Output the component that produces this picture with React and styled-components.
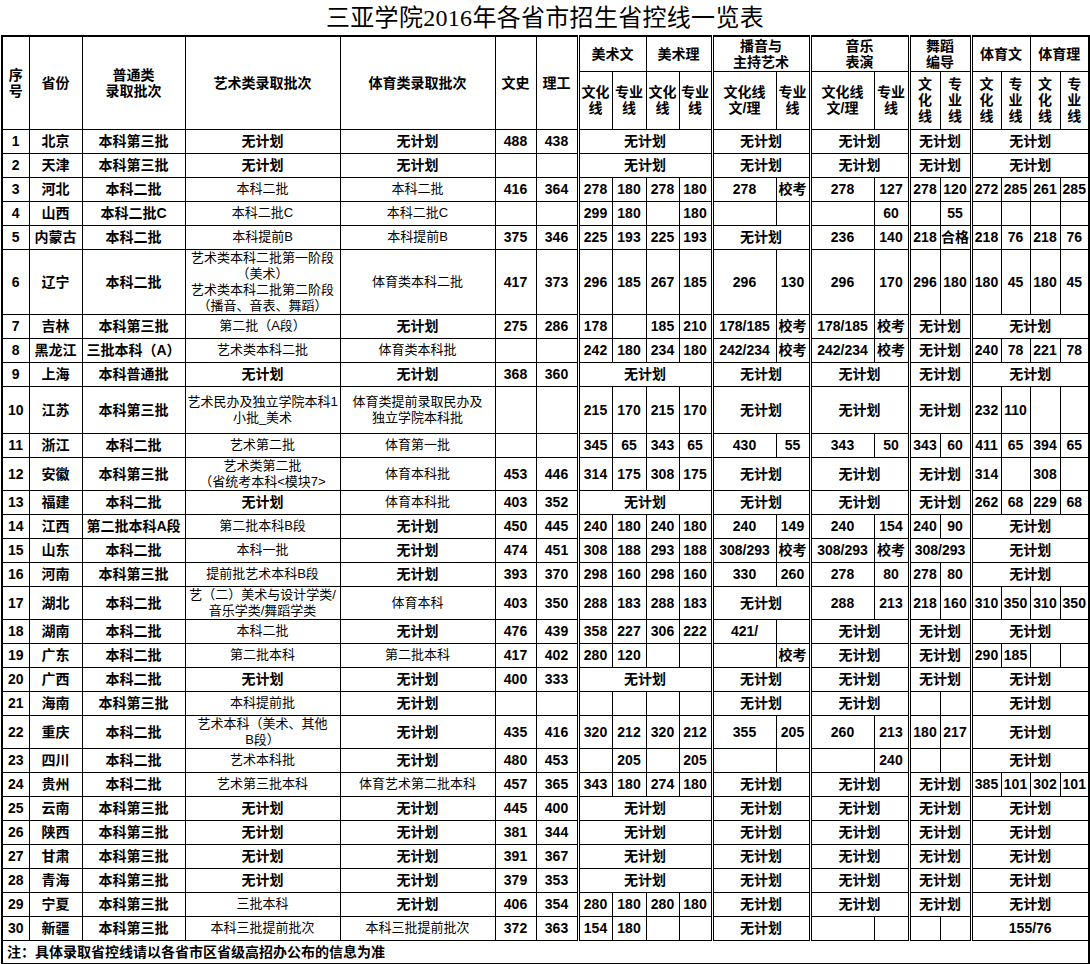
import React from 'react'
import styled, { createGlobalStyle } from 'styled-components'

const GlobalStyle = createGlobalStyle`
  body {
    margin: 0;
    background: #fff;
    color: #000;
  }
`

const N = '无计划'
const ALL = [[N, 4], [N, 2], [N, 2], [N, 2], [N, 4]]
const widths = [27, 53, 103, 155, 155, 41, 42, 34, 34, 33, 33, 64, 34, 64, 35, 31, 31, 30, 29, 30, 29]
const dblStarts = [7, 11, 13, 15, 17]

const rows = [
  { p: '北京', b: '本科第三批', art: N, pe: N, w: '488', l: '438', g: ALL },
  { p: '天津', b: '本科第三批', art: N, pe: N, w: '', l: '', g: ALL },
  { p: '河北', b: '本科二批', art: '本科二批', pe: '本科二批', w: '416', l: '364',
    g: ['278', '180', '278', '180', '278', '校考', '278', '127', '278', '120', '272', '285', '261', '285'] },
  { p: '山西', b: '本科二批C', art: '本科二批C', pe: '本科二批C', w: '', l: '',
    g: ['299', '180', '', '180', '', '', '', '60', '', '55', '', '', '', ''] },
  { p: '内蒙古', b: '本科二批', art: '本科提前B', pe: '本科提前B', w: '375', l: '346',
    g: ['225', '193', '225', '193', [N, 2], '236', '140', '218', '合格', '218', '76', '218', '76'] },
  { p: '辽宁', b: '本科二批', h: 64,
    art: '艺术类本科二批第一阶段\n（美术）\n艺术类本科二批第二阶段\n（播音、音表、舞蹈）',
    pe: '体育类本科二批', w: '417', l: '373',
    g: ['296', '185', '267', '185', '296', '130', '296', '170', '296', '180', '180', '45', '180', '45'] },
  { p: '吉林', b: '本科第三批', art: '第二批（A段）', pe: N, w: '275', l: '286',
    g: ['178', '', '185', '210', '178/185', '校考', '178/185', '校考', [N, 2], [N, 4]] },
  { p: '黑龙江', b: '三批本科（A）', art: '艺术类本科二批', pe: '体育类本科批', w: '', l: '',
    g: ['242', '180', '234', '180', '242/234', '校考', '242/234', '校考', [N, 2], '240', '78', '221', '78'] },
  { p: '上海', b: '本科普通批', art: N, pe: N, w: '368', l: '360', g: ALL },
  { p: '江苏', b: '本科第三批', h: 47, art: '艺术民办及独立学院本科1\n小批_美术',
    pe: '体育类提前录取民办及\n独立学院本科批', w: '', l: '',
    g: ['215', '170', '215', '170', [N, 2], [N, 2], [N, 2], '232', '110', '', ''] },
  { p: '浙江', b: '本科二批', art: '艺术第二批', pe: '体育第一批', w: '', l: '',
    g: ['345', '65', '343', '65', '430', '55', '343', '50', '343', '60', '411', '65', '394', '65'] },
  { p: '安徽', b: '本科第三批', h: 32, art: '艺术类第二批\n（省统考本科<模块7>', pe: '体育本科批', w: '453', l: '446',
    g: ['314', '175', '308', '175', [N, 2], [N, 2], [N, 2], '314', '', '308', ''] },
  { p: '福建', b: '本科二批', art: N, pe: '体育本科批', w: '403', l: '352',
    g: [[N, 4], [N, 2], [N, 2], [N, 2], '262', '68', '229', '68'] },
  { p: '江西', b: '第二批本科A段', art: '第二批本科B段', pe: N, w: '450', l: '445',
    g: ['240', '180', '240', '180', '240', '149', '240', '154', '240', '90', [N, 4]] },
  { p: '山东', b: '本科二批', art: '本科一批', pe: N, w: '474', l: '451',
    g: ['308', '188', '293', '188', '308/293', '校考', '308/293', '校考', ['308/293', 2], [N, 4]] },
  { p: '河南', b: '本科第三批', art: '提前批艺术本科B段', pe: N, w: '393', l: '370',
    g: ['298', '160', '298', '160', '330', '260', '278', '80', '278', '80', [N, 4]] },
  { p: '湖北', b: '本科二批', h: 32, art: '艺（二）美术与设计学类/\n音乐学类/舞蹈学类', pe: '体育本科', w: '403', l: '350',
    g: ['288', '183', '288', '183', [N, 2], '288', '213', '218', '160', '310', '350', '310', '350'] },
  { p: '湖南', b: '本科二批', art: '本科二批', pe: N, w: '476', l: '439',
    g: ['358', '227', '306', '222', '421/', '', [N, 2], [N, 2], [N, 4]] },
  { p: '广东', b: '本科二批', art: '第二批本科', pe: '第二批本科', w: '417', l: '402',
    g: ['280', '120', '', '', '', '校考', [N, 2], [N, 2], '290', '185', '', ''] },
  { p: '广西', b: '本科二批', art: N, pe: N, w: '400', l: '333', g: ALL },
  { p: '海南', b: '本科第三批', art: '本科提前批', pe: N, w: '', l: '',
    g: ['', '', '', '', [N, 2], [N, 2], '', '', [N, 4]] },
  { p: '重庆', b: '本科二批', h: 32, art: '艺术本科（美术、其他\nB段）', pe: N, w: '435', l: '416',
    g: ['320', '212', '320', '212', '355', '205', '260', '213', '180', '217', [N, 4]] },
  { p: '四川', b: '本科二批', art: '艺术本科批', pe: N, w: '480', l: '453',
    g: ['', '205', '', '205', '', '', '', '240', '', '', [N, 4]] },
  { p: '贵州', b: '本科二批', art: '艺术第三批本科', pe: '体育艺术第二批本科', w: '457', l: '365',
    g: ['343', '180', '274', '180', [N, 2], [N, 2], [N, 2], '385', '101', '302', '101'] },
  { p: '云南', b: '本科第三批', art: N, pe: N, w: '445', l: '400', g: ALL },
  { p: '陕西', b: '本科第三批', art: N, pe: N, w: '381', l: '344', g: ALL },
  { p: '甘肃', b: '本科第三批', art: N, pe: N, w: '391', l: '367', g: ALL },
  { p: '青海', b: '本科第三批', art: N, pe: N, w: '379', l: '353', g: ALL },
  { p: '宁夏', b: '本科第三批', art: '三批本科', pe: N, w: '406', l: '354',
    g: ['280', '180', '280', '180', [N, 2], [N, 2], [N, 2], [N, 4]] },
  { p: '新疆', b: '本科第三批', art: '本科三批提前批次', pe: '本科三批提前批次', w: '372', l: '363',
    g: ['154', '180', '', '', [N, 2], '', '', '', '', ['155/76', 4]] },
]

const groups = [
  ['美术文', 7], ['美术理', 9], ['播音与\n主持艺术', 11], ['音乐\n表演', 13],
  ['舞蹈\n编导', 15], ['体育文', 17], ['体育理', 19],
]

const subHeads = [
  '文化\n线', '专业\n线', '文化\n线', '专业\n线', '文化线\n文/理', '专业\n线',
  '文化线\n文/理', '专业\n线', '文\n化\n线', '专\n业\n线', '文\n化\n线', '专\n业\n线',
  '文\n化\n线', '专\n业\n线',
]

const Page = styled.div`
  width: 1088px;
  padding-left: 1px;
  font-family: "Liberation Sans", "Noto Sans CJK SC", sans-serif;
`

const Title = styled.h1`
  margin: 0;
  height: 35px;
  line-height: 37px;
  text-align: center;
  font-family: "Liberation Serif", "Noto Sans CJK SC", serif;
  font-size: 24px;
  font-weight: 400;
  letter-spacing: 0.3px;
`

const Sheet = styled.table`
  width: 1087px;
  table-layout: fixed;
  border-collapse: collapse;
  border: 2px solid #000;
`

const Row = styled.tr`
  height: ${(p) => p.$h}px;
`

const HeadCell = styled.th`
  padding: 0;
  border: 1px solid #000;
  border-left: ${(p) => (p.$dbl ? '3px double #000' : '1px solid #000')};
  font-size: 14px;
  font-weight: 700;
  line-height: 16px;
  text-align: center;
  vertical-align: middle;
  white-space: nowrap;
`

const Cell = styled.td`
  padding: 0;
  border: 1px solid #000;
  border-left: ${(p) => (p.$dbl ? '3px double #000' : '1px solid #000')};
  font-size: ${(p) => (p.$bold ? '14px' : '13px')};
  font-weight: ${(p) => (p.$bold ? 700 : 400)};
  line-height: 16px;
  text-align: center;
  vertical-align: middle;
  white-space: nowrap;
  overflow: hidden;
`

const NoteCell = styled.td`
  padding: 0 0 0 4px;
  border: 1px solid #000;
  font-size: 14px;
  font-weight: 700;
  line-height: 16px;
  text-align: left;
  vertical-align: middle;
`

const Lines = ({ t }) =>
  t.split('\n').map((s, i) => (
    <React.Fragment key={i}>
      {i > 0 && <br />}
      {s}
    </React.Fragment>
  ))

function DataRow({ r, idx }) {
  let col = 7
  return (
    <Row $h={r.h || 24}>
      <Cell $bold>{idx + 1}</Cell>
      <Cell $bold>{r.p}</Cell>
      <Cell $bold>{r.b}</Cell>
      <Cell $bold={r.art === N}><Lines t={r.art} /></Cell>
      <Cell $bold={r.pe === N}><Lines t={r.pe} /></Cell>
      <Cell $bold>{r.w}</Cell>
      <Cell $bold>{r.l}</Cell>
      {r.g.map((c, k) => {
        const [t, span] = Array.isArray(c) ? c : [c, 1]
        const start = col
        col += span
        return (
          <Cell key={k} colSpan={span} $bold $dbl={dblStarts.includes(start)}>
            {t}
          </Cell>
        )
      })}
    </Row>
  )
}

export default function App() {
  return (
    <Page>
      <GlobalStyle />
      <Title>三亚学院2016年各省市招生省控线一览表</Title>
      <Sheet>
        <colgroup>
          {widths.map((w, i) => (
            <col key={i} style={{ width: w }} />
          ))}
        </colgroup>
        <thead>
          <Row $h={35}>
            <HeadCell rowSpan={2}><Lines t={'序\n号'} /></HeadCell>
            <HeadCell rowSpan={2}>省份</HeadCell>
            <HeadCell rowSpan={2}><Lines t={'普通类\n录取批次'} /></HeadCell>
            <HeadCell rowSpan={2}>艺术类录取批次</HeadCell>
            <HeadCell rowSpan={2}>体育类录取批次</HeadCell>
            <HeadCell rowSpan={2}>文史</HeadCell>
            <HeadCell rowSpan={2}>理工</HeadCell>
            {groups.map(([t, start]) => (
              <HeadCell key={t} colSpan={2} $dbl={dblStarts.includes(start)}>
                <Lines t={t} />
              </HeadCell>
            ))}
          </Row>
          <Row $h={58}>
            {subHeads.map((t, i) => (
              <HeadCell key={i} $dbl={dblStarts.includes(i + 7)}>
                <Lines t={t} />
              </HeadCell>
            ))}
          </Row>
        </thead>
        <tbody>
          {rows.map((r, i) => (
            <DataRow key={i} r={r} idx={i} />
          ))}
          <Row $h={24}>
            <NoteCell colSpan={21}>注：具体录取省控线请以各省市区省级高招办公布的信息为准</NoteCell>
          </Row>
        </tbody>
      </Sheet>
    </Page>
  )
}
